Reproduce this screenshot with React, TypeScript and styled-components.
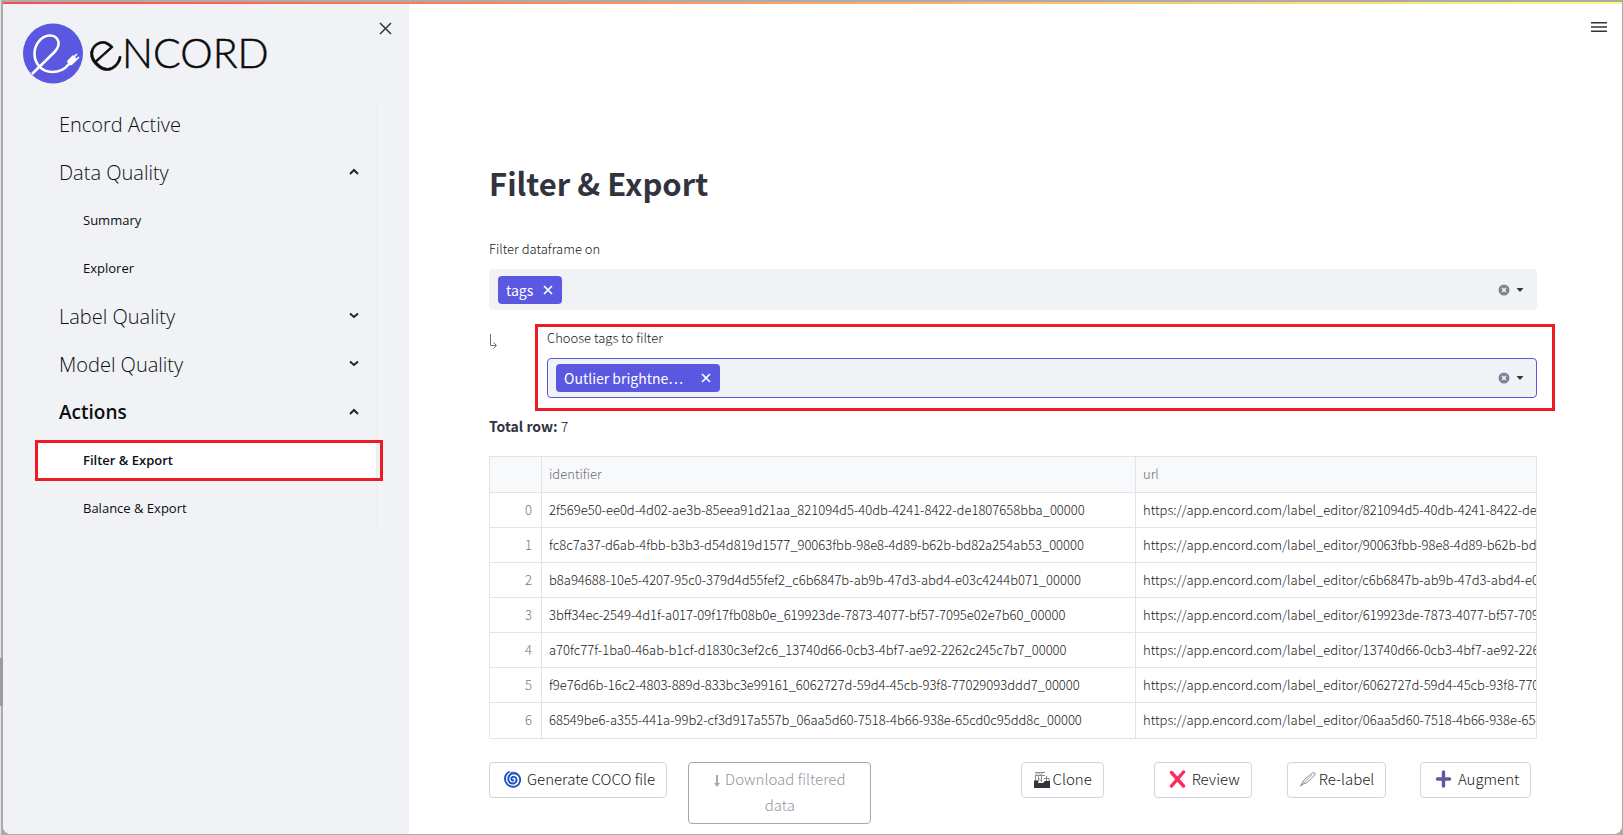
import React from "react";
import styled, { createGlobalStyle, css } from "styled-components";

const body = `"Noto Sans CJK SC", "Noto Sans", sans-serif`;
const ink = "#31333f";
const inkStrong = "#171922";
const accent = "#5a58e0";
const panel = "#f0f2f6";
const rule = "#e3e4e8";
const mark = "#ed1c24";

const GlobalStyle = createGlobalStyle`
  *, *::before, *::after { box-sizing: border-box; }
  body {
    margin: 0;
    color: ${ink};
    font-family: ${body};
    background: #b2b2b2;
  }
  button, input { font: inherit; color: inherit; }
`;

/* ---------- window frame ---------- */

const Desktop = styled.div`
  display: flex;
  min-height: 100vh;
  padding: 2px 1px 2px 3px;
  background:
    linear-gradient(#3f7f9c, #3f7f9c) right 132px bottom 0 / 27px 1px no-repeat,
    linear-gradient(#9c9c9c, #9c9c9c) left 0 top 658px / 3px 48px no-repeat,
    linear-gradient(#e4e4e4, #e4e4e4) left 0 top 0 / 1px 100% no-repeat,
    #ababab;
`;

const AppWindow = styled.div`
  position: relative;
  display: flex;
  flex: 1;
  min-width: 0;
  overflow: hidden;
  background: #fff;
  border-radius: 0 0 8px 8px;
`;

const Decoration = styled.div`
  position: absolute;
  top: 0;
  left: 0;
  right: 0;
  height: 2px;
  background: linear-gradient(90deg, #ff4b4b, #fffd80);
`;

const Highlight = styled.div`
  position: absolute;
  border: 3px solid ${mark};
  pointer-events: none;
`;

/* ---------- sidebar ---------- */

const Sidebar = styled.aside`
  flex: 0 0 406px;
  background: ${panel};
`;

const SidebarHeader = styled.header`
  display: flex;
  align-items: flex-start;
  justify-content: space-between;
  height: 98px;
  padding: 20px 17px 0 20px;
`;

const IconButton = styled.button`
  display: flex;
  padding: 0;
  border: 0;
  background: none;
  cursor: pointer;
`;

const Nav = styled.nav`
  width: 342px;
  margin-left: 32px;
  border-right: 1px solid #eceef2;
`;

const navRow = css`
  display: flex;
  align-items: center;
  width: 100%;
  height: 36px;
  margin: 0;
  border: 0;
  background: none;
  color: #0c0e11;
  font-family: "Open Sans", "Noto Sans", sans-serif;
  text-decoration: none;
`;

const NavGroup = styled.button<{ $active?: boolean }>`
  ${navRow}
  justify-content: space-between;
  padding: 0 16px 0 24px;
  font-size: ${(p) => (p.$active ? 19 : 20)}px;
  font-weight: ${(p) => (p.$active ? 600 : 300)};
`;

const NavLink = styled.a<{ $level?: "top" | "sub"; $active?: boolean }>`
  ${navRow}
  padding-left: ${(p) => (p.$level === "top" ? 24 : 48)}px;
  font-size: ${(p) => (p.$level === "top" ? 20 : 13)}px;
  font-weight: ${(p) => (p.$active ? 600 : p.$level === "top" ? 300 : 400)};
  background: ${(p) => (p.$active ? "#fff" : "none")};
  border-radius: 4px;
`;

const NavItem = styled.div`
  position: relative;
  padding: 6px 0;
`;

const NavHighlight = styled(Highlight)`
  inset: 4px -7px 3px 0;
`;

/* ---------- main ---------- */

const Main = styled.main`
  flex: 1;
  min-width: 0;
  padding: 0 85px 10px 80px;
`;

const TopBar = styled.div`
  display: flex;
  justify-content: flex-end;
  height: 150px;
  margin-right: -70px;
  padding-top: 19px;
`;

const Title = styled.h1`
  margin: 0 0 25px;
  font-size: 31px;
  line-height: 62px;
  font-weight: 700;
`;

const Field = styled.div`
  flex: 1;
  min-width: 0;
`;

const Label = styled.label`
  display: block;
  margin-bottom: 10px;
  color: ${inkStrong};
  font-size: 13px;
  line-height: 20px;
  font-weight: 300;
`;

const SelectBox = styled.div<{ $focused?: boolean }>`
  display: flex;
  align-items: center;
  height: ${(p) => (p.$focused ? 40 : 41)}px;
  padding: 0 11px 0 8px;
  border: 1px solid ${(p) => (p.$focused ? accent : panel)};
  border-radius: 4px;
  background: ${panel};
`;

const Tag = styled.span<{ $wide?: boolean }>`
  display: flex;
  align-items: center;
  justify-content: space-between;
  width: ${(p) => (p.$wide ? 164 : 64)}px;
  height: 28px;
  padding: 0 9px 0 8px;
  border-radius: 4px;
  background: ${accent};
  color: #fff;
  font-size: 14px;
  line-height: 28px;
`;

const SelectInput = styled.input`
  flex: 1;
  min-width: 0;
  height: 28px;
  padding: 0 4px;
  border: 0;
  outline: 0;
  background: none;
  font-size: 14px;
`;

const SelectActions = styled.div`
  display: flex;
  align-items: center;
  gap: 5px;
`;

const Nested = styled.div`
  position: relative;
  display: flex;
  gap: 48px;
  margin-top: 18px;
`;

const Branch = styled.div`
  flex: 0 0 10px;
  padding-top: 3px;
`;

const NestedHighlight = styled(Highlight)`
  inset: -4px -18px -13px 46px;
`;

const Total = styled.p`
  margin: 16px 0 18px;
  font-size: 14px;
  line-height: 24px;
  font-weight: 300;
  color: ${inkStrong};

  strong { font-weight: 700; color: ${ink}; }
`;

const TableFrame = styled.div`
  overflow: hidden;
  border: 1px solid ${rule};
`;

const Table = styled.table`
  width: 100%;
  table-layout: fixed;
  border-collapse: separate;
  border-spacing: 0;
  font-size: 13px;
  line-height: 20px;
`;

const cell = css`
  padding: 0 7px 1px;
  overflow: hidden;
  border-right: 1px solid ${rule};
  border-bottom: 1px solid ${rule};
  white-space: nowrap;
  font-weight: 300;

  &:last-child { border-right: 0; }
`;

const Cell = styled.td<{ $index?: boolean }>`
  ${cell}
  height: 35px;
  padding-right: ${(p) => (p.$index ? 9 : 7)}px;
  color: ${(p) => (p.$index ? "#74767f" : inkStrong)};
  text-align: ${(p) => (p.$index ? "right" : "left")};

  tr:last-child > & { border-bottom: 0; }
`;

const HeadCell = styled.th`
  ${cell}
  height: 36px;
  background: #f8f9fb;
  color: #6a6d7a;
  text-align: left;
`;

const Col = styled.col<{ $width?: number }>`
  width: ${(p) => (p.$width ? `${p.$width}px` : "auto")};
`;

const ActionGrid = styled.div`
  display: grid;
  grid-template-columns: 183fr 183fr repeat(5, 117fr);
  column-gap: 16px;
  align-items: start;
  justify-items: start;
  margin-top: 23px;
`;

const ActionButton = styled.button<{ $tight?: boolean }>`
  display: flex;
  align-items: center;
  gap: ${(p) => (p.$tight ? 3 : 6)}px;
  min-height: 36px;
  padding: 3px 11px 5px ${(p) => (p.$tight ? 12 : 14)}px;
  border: 1px solid #d3d4d9;
  border-radius: 4px;
  background: #fff;
  color: ${inkStrong};
  font-size: 15px;
  line-height: 26px;
  font-weight: 300;
  white-space: nowrap;

  svg { flex: none; }

  &:nth-of-type(3) { grid-column: 4; }

  &:disabled {
    display: block;
    width: 100%;
    padding: 3px 16px 5px;
    border-color: #a6a7ad;
    color: #94959b;
    white-space: normal;
  }
  &:disabled svg {
    margin-right: 5px;
    vertical-align: middle;
  }
`;

/* ---------- icons ---------- */

const LogoSvg = styled.svg`
  overflow: visible;
`;

const Logo = () => (
  <LogoSvg width="250" height="64" viewBox="0 0 250 64" role="img" aria-label="Encord">
    <circle cx="30" cy="31.500" r="30" fill={accent} />
    <path
      d="M9 52 L31 30.500 C34.500 27 36 24 35.500 20 C34.500 15.500 30.500 13 26 13.500 C17.500 14.500 11.500 23 11.500 31.500 C11.500 42 19 50 29 50 C36 50 42 47 45.500 42.500"
      fill="none"
      stroke="#fff"
      strokeWidth="2.600"
    />
    <path d="M44 39 L50 33 L54.500 37.500 L49 43 L45.500 43.500 Z" fill="#fff" />
    <path d="M51 35 L54 32 M53 38 L56 35" stroke="#fff" strokeWidth="1.600" />
    <g fill="#0b0b0b" stroke="#0b0b0b" strokeWidth=".5" fontFamily="Lato, sans-serif" fontWeight="300">
      <text x="0" y="0" fontSize="60" transform="translate(80 56) rotate(-42)">e</text>
      <text x="99" y="46" fontSize="41">NCORD</text>
    </g>
  </LogoSvg>
);

const CloseIcon = () => (
  <svg width="13" height="13" viewBox="0 0 13 13" stroke={ink} strokeWidth="1.500" fill="none">
    <path d="M1 1 L12 12 M12 1 L1 12" />
  </svg>
);

const Chevron = ({ up }: { up?: boolean }) => (
  <svg width="12" height="8" viewBox="0 0 12 8" stroke="#212529" strokeWidth="2" fill="none">
    <path d={up ? "M2 6 L6 2 L10 6" : "M2 1.500 L6 5 L10 1.500"} />
  </svg>
);

const MenuIcon = () => (
  <svg width="16" height="12" viewBox="0 0 16 12" fill={ink}>
    <path d="M0 1h16v1.500H0zM0 5.200h16v1.500H0zM0 9.500h16v1.500H0z" />
  </svg>
);

const RemoveIcon = () => (
  <svg width="10" height="10" viewBox="0 0 10 10" stroke="#fff" strokeWidth="1.700" fill="none">
    <path d="M1 1 L9 9 M9 1 L1 9" />
  </svg>
);

const ClearIcon = () => (
  <svg width="12" height="12" viewBox="0 0 12 12">
    <circle cx="6" cy="6" r="5.500" fill="#808495" />
    <path d="M4 4 L8 8 M8 4 L4 8" stroke="#fff" strokeWidth="1.200" />
  </svg>
);

const CaretIcon = () => (
  <svg width="10" height="6" viewBox="0 0 10 6" fill={ink}>
    <path d="M1.500 1 H8.500 L5.500 4.500 H4.500 Z" />
  </svg>
);

const BranchIcon = () => (
  <svg width="9" height="16" viewBox="0 0 9 16" stroke="#6d6f79" fill="none">
    <path d="M1.500 0 V11.500 H7" />
    <path d="M4.500 8.500 L7.500 11.500 L4.500 14.500" />
  </svg>
);

const CycloneIcon = () => (
  <svg width="17" height="17" viewBox="0 0 17 17" fill="none" stroke="#1c4fc0" strokeWidth="1.900" strokeLinecap="round">
    <path d="M5 1 C1.500 3 .5 7 1.500 10.500 C3 15 8.500 17 12.500 15 C16.500 13 17 8 15 5 C12.500 1.500 7 1.500 5 5 C3.500 8 4.500 12 8 12.500 C11 13 13 10.500 12.500 8 C12 5.500 8.500 5 7.500 7 C7 8.500 8 9.800 9.300 9.300" />
    <path d="M7 1.500 C9 .8 12 1.300 14 3" strokeWidth="1" />
  </svg>
);

const DownIcon = () => (
  <svg width="6" height="14" viewBox="0 0 6 14" fill="#a6a7ad">
    <path d="M2 1h2v8h2L3 13 0 9h2z" />
  </svg>
);

const CraneIcon = () => (
  <svg width="16" height="18" viewBox="0 0 16 18" fill="none" stroke="#8a8c94">
    <path d="M1 2.500 H11 M1 5.500 H11 M1.500 5 L4 2.500 L6.500 5 L9 2.500 M4.500 5 V12 M7.500 5 V12 M4.500 8 L7.500 11 M1.500 5 V11" />
    <path d="M12.500 6 V11 M15 8 V11 M10 8.500 H15" />
    <path d="M0 18 V10.500 H4 V13 H9 L11 11 H16 V18 Z" fill={ink} stroke="none" />
  </svg>
);

const CrossIcon = () => (
  <svg width="17" height="18" viewBox="0 0 17 18" stroke="#ff2b5e" strokeWidth="3.400" strokeLinecap="round">
    <path d="M2.500 2.500 L14.500 16 M14.500 2 L2.500 16" />
  </svg>
);

const PenIcon = () => (
  <svg width="16" height="16" viewBox="0 0 16 16" fill="none" stroke="#8a8c94">
    <path d="M.5 15 L4 9 L11 3 C13 1.500 15.500 1 15 3 C14 5.500 9.500 9 7 11.500 L3.500 13 Z" />
    <path d="M1 14.500 L12 4" strokeWidth=".7" />
  </svg>
);

const PlusIcon = () => (
  <svg width="17" height="18" viewBox="0 0 17 18" stroke="#5f57a0" strokeWidth="3.400" strokeLinecap="round">
    <path d="M8.500 2 V16 M2.500 9 H14.500" />
  </svg>
);

/* ---------- data ---------- */

const rows = [
  ["2f569e50-ee0d-4d02-ae3b-85eea91d21aa", "821094d5-40db-4241-8422-de1807658bba"],
  ["fc8c7a37-d6ab-4fbb-b3b3-d54d819d1577", "90063fbb-98e8-4d89-b62b-bd82a254ab53"],
  ["b8a94688-10e5-4207-95c0-379d4d55fef2", "c6b6847b-ab9b-47d3-abd4-e03c4244b071"],
  ["3bff34ec-2549-4d1f-a017-09f17fb08b0e", "619923de-7873-4077-bf57-7095e02e7b60"],
  ["a70fc77f-1ba0-46ab-b1cf-d1830c3ef2c6", "13740d66-0cb3-4bf7-ae92-2262c245c7b7"],
  ["f9e76d6b-16c2-4803-889d-833bc3e99161", "6062727d-59d4-45cb-93f8-77029093ddd7"],
  ["68549be6-a355-441a-99b2-cf3d917a557b", "06aa5d60-7518-4b66-938e-65cd0c95dd8c"],
];

type MultiSelectProps = { id: string; label: string; tag: string; wide?: boolean; focused?: boolean };

const MultiSelect = ({ id, label, tag, wide, focused }: MultiSelectProps) => (
  <Field>
    <Label htmlFor={id}>{label}</Label>
    <SelectBox $focused={focused}>
      <Tag $wide={wide}>
        {tag}
        <IconButton type="button" aria-label={`Remove ${tag}`}><RemoveIcon /></IconButton>
      </Tag>
      <SelectInput id={id} type="text" />
      <SelectActions>
        <IconButton type="button" aria-label="Clear all"><ClearIcon /></IconButton>
        <IconButton type="button" aria-label="Open"><CaretIcon /></IconButton>
      </SelectActions>
    </SelectBox>
  </Field>
);

export default function App() {
  return (
    <Desktop>
      <GlobalStyle />
      <AppWindow>
        <Sidebar>
          <SidebarHeader>
            <Logo />
            <IconButton type="button" aria-label="Close sidebar"><CloseIcon /></IconButton>
          </SidebarHeader>
          <Nav>
            <NavItem><NavLink href="#active" $level="top">Encord Active</NavLink></NavItem>
            <NavItem><NavGroup type="button">Data Quality<Chevron up /></NavGroup></NavItem>
            <NavItem><NavLink href="#summary">Summary</NavLink></NavItem>
            <NavItem><NavLink href="#explorer">Explorer</NavLink></NavItem>
            <NavItem><NavGroup type="button">Label Quality<Chevron /></NavGroup></NavItem>
            <NavItem><NavGroup type="button">Model Quality<Chevron /></NavGroup></NavItem>
            <NavItem><NavGroup type="button" $active>Actions<Chevron up /></NavGroup></NavItem>
            <NavItem>
              <NavLink href="#filter" $active>Filter &amp; Export</NavLink>
              <NavHighlight />
            </NavItem>
            <NavItem><NavLink href="#balance">Balance &amp; Export</NavLink></NavItem>
          </Nav>
        </Sidebar>
        <Main>
          <TopBar>
            <IconButton type="button" aria-label="Menu"><MenuIcon /></IconButton>
          </TopBar>
          <Title>Filter &amp; Export</Title>
          <MultiSelect id="columns" label="Filter dataframe on" tag="tags" />
          <Nested>
            <Branch><BranchIcon /></Branch>
            <MultiSelect id="tags" label="Choose tags to filter" tag="Outlier brightne…" wide focused />
            <NestedHighlight />
          </Nested>
          <Total><strong>Total row:</strong> 7</Total>
          <TableFrame>
            <Table>
              <colgroup><Col $width={52} /><Col $width={594} /><Col /></colgroup>
              <thead>
                <tr><HeadCell aria-label="index" /><HeadCell>identifier</HeadCell><HeadCell>url</HeadCell></tr>
              </thead>
              <tbody>
                {rows.map(([data, label], i) => (
                  <tr key={data}>
                    <Cell $index>{i}</Cell>
                    <Cell>{`${data}_${label}_00000`}</Cell>
                    <Cell>{`https://app.encord.com/label_editor/${label}`}</Cell>
                  </tr>
                ))}
              </tbody>
            </Table>
          </TableFrame>
          <ActionGrid>
            <ActionButton type="button"><CycloneIcon />Generate COCO file</ActionButton>
            <ActionButton type="button" disabled><DownIcon />Download filtered data</ActionButton>
            <ActionButton type="button" $tight><CraneIcon />Clone</ActionButton>
            <ActionButton type="button"><CrossIcon />Review</ActionButton>
            <ActionButton type="button" $tight><PenIcon />Re-label</ActionButton>
            <ActionButton type="button"><PlusIcon />Augment</ActionButton>
          </ActionGrid>
        </Main>
        <Decoration />
      </AppWindow>
    </Desktop>
  );
}
